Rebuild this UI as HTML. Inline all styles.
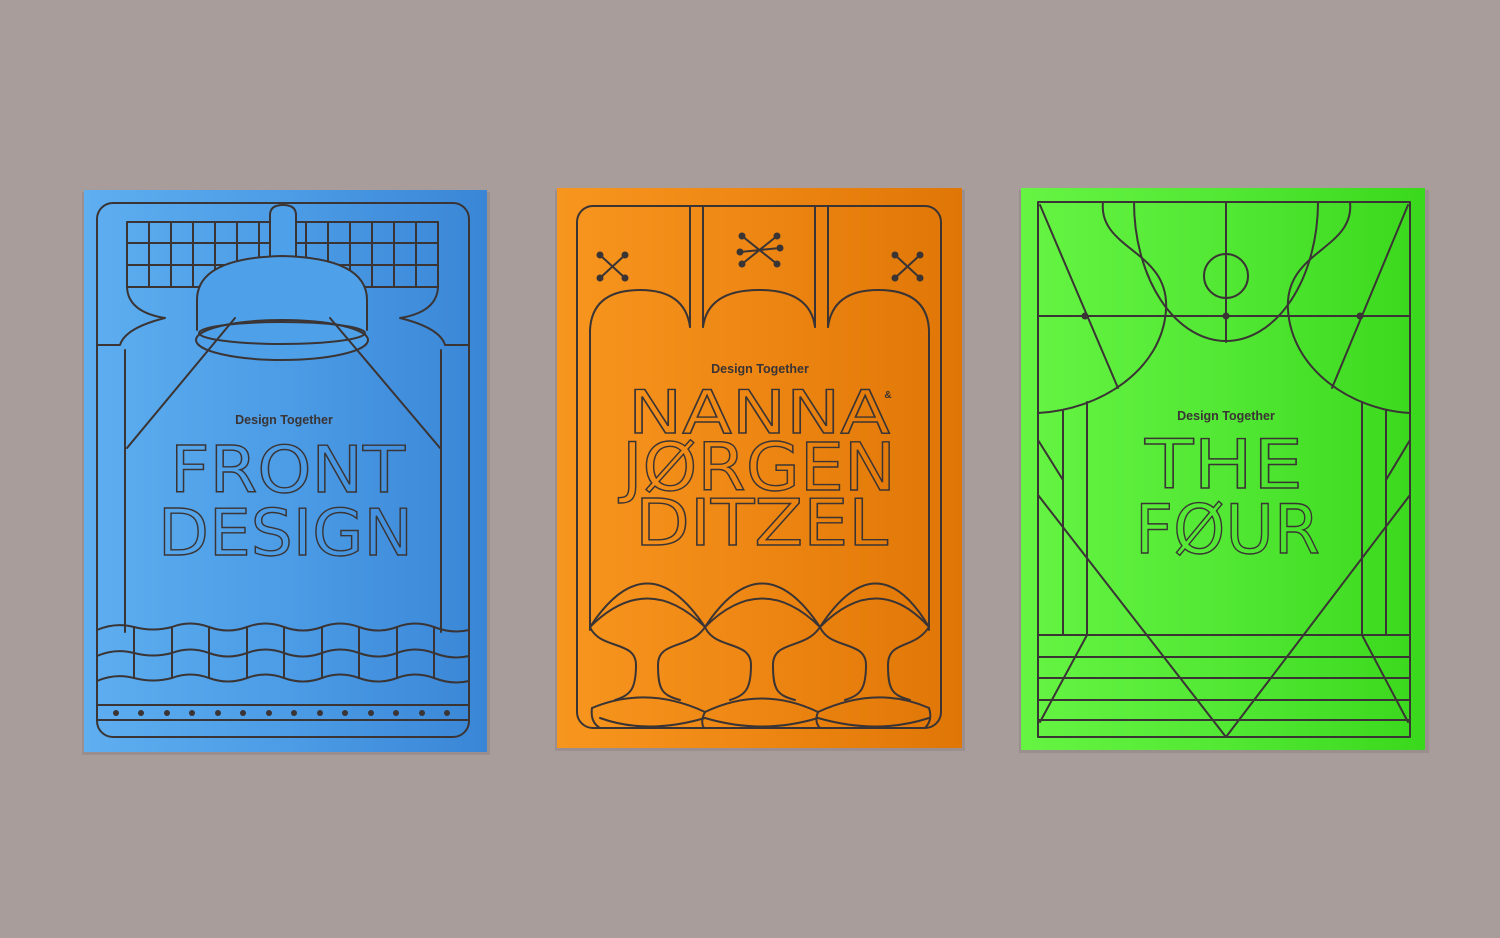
<!DOCTYPE html>
<html><head><meta charset="utf-8"><style>html,body{margin:0;padding:0;background:#a89d9b;}svg{display:block}</style></head><body>
<svg width="1500" height="938" viewBox="0 0 1500 938" xmlns="http://www.w3.org/2000/svg">
<defs>
<linearGradient id="gb" x1="0" x2="1"><stop offset="0" stop-color="#5eaef0"/><stop offset="0.5" stop-color="#4c9ce6"/><stop offset="1" stop-color="#3a86d6"/></linearGradient>
<linearGradient id="go" x1="0" x2="1"><stop offset="0" stop-color="#f7961f"/><stop offset="0.5" stop-color="#ee8613"/><stop offset="1" stop-color="#df7606"/></linearGradient>
<linearGradient id="gg" x1="0" x2="1"><stop offset="0" stop-color="#66f443"/><stop offset="0.5" stop-color="#52e834"/><stop offset="1" stop-color="#3ad81c"/></linearGradient>
</defs>
<rect width="1500" height="938" fill="#a89d9b"/>
<rect x="82" y="192" width="408" height="563" fill="#9a8f8e"/>
<rect x="555" y="190" width="410" height="561" fill="#9a8f8e"/>
<rect x="1019" y="190" width="410" height="563" fill="#9a8f8e"/>
<rect x="84" y="190" width="403" height="562" fill="url(#gb)"/>
<rect x="557" y="188" width="405" height="560" fill="url(#go)"/>
<rect x="1021" y="188" width="404" height="562" fill="url(#gg)"/>

<g fill="none" stroke="#3a3434" stroke-width="2" stroke-linejoin="round" stroke-linecap="round">
<!-- BLUE -->
<rect x="97" y="203" width="372" height="534" rx="16"/>
<path d="M127,222H438M127,243H438M127,265H438M127,287H438"/>
<path d="M127,222V287M149,222V287M171,222V287M193,222V287M215,222V287M237,222V287M259,222V287M306,222V287M328,222V287M350,222V287M372,222V287M394,222V287M416,222V287M438,222V287"/>
<path d="M270,262V215Q270,205 283,205Q296,205 296,215V262" fill="#4ea0e8"/>
<path d="M197,330V300Q197,258 282,256Q367,258 367,300V330" fill="#4ea0e8"/>
<ellipse cx="282" cy="340" rx="86" ry="20" fill="#4ea0e8"/>
<ellipse cx="282" cy="333" rx="83" ry="11"/>
<path d="M235,318L127,448M330,318L440,448"/>
<path d="M127,287Q128,312 165,318Q125,328 120,345L97,345"/>
<path d="M438,287Q437,312 400,318Q440,328 445,345L469,345"/>
<path d="M125,350V632M441,350V632"/>
<path d="M97,630Q115,622 134,627Q153,632 172,627Q190,620 209,627Q228,634 247,627Q265,620 284,627Q303,634 322,627Q340,620 359,627Q378,634 397,627Q415,620 434,627Q452,634 469,630"/>
<path d="M97,656Q115,648 134,653Q153,658 172,653Q190,646 209,653Q228,660 247,653Q265,646 284,653Q303,660 322,653Q340,646 359,653Q378,660 397,653Q415,646 434,653Q452,660 469,656"/>
<path d="M97,681Q115,673 134,678Q153,683 172,678Q190,671 209,678Q228,685 247,678Q265,671 284,678Q303,685 322,678Q340,671 359,678Q378,685 397,678Q415,671 434,678Q452,685 469,681"/>
<path d="M134,627V678M172,627V678M209,627V678M247,627V678M284,627V678M322,627V678M359,627V678M397,627V678M434,627V678"/>
<path d="M97,705H469M97,720H469"/>
<!-- ORANGE -->
<rect x="577" y="206" width="364" height="522" rx="16"/>
<path d="M690,206V327M703,206V327M815,206V327M828,206V327"/>
<path d="M590,630V330Q592,290 640,290Q685,290 690,327"/>
<path d="M703,327Q708,290 759,290Q810,290 815,327"/>
<path d="M828,327Q833,290 878,290Q927,290 929,330V630"/>
<path d="M600,255L625,278M625,255L600,278M895,255L920,278M920,255L895,278M742,236L777,264M777,236L742,264M740,252L780,248"/>
<path d="M590,627Q647,540 705,627Q762,540 820,627Q877,540 929,627"/>
<path d="M590,627Q647,570 705,627Q762,570 820,627Q877,570 929,627"/>
<path d="M590,627C600,650 636,640 636,665C636,690 630,695 615,700M705,627C690,650 658,640 658,665C658,690 662,695 680,700"/>
<path d="M705,627C715,650 751,640 751,665C751,690 745,695 730,700M820,627C805,650 773,640 773,665C773,690 777,695 795,700"/>
<path d="M820,627C830,650 866,640 866,665C866,690 860,695 845,700M929,627C914,650 888,640 888,665C888,690 892,695 910,700"/>
<path d="M592,708Q647,685 705,712Q762,685 818,712Q877,685 929,708"/>
<path d="M592,708Q590,722 600,728M705,712Q700,722 704,728M818,712Q814,722 820,728M929,708Q933,720 925,728"/>
<path d="M600,718Q647,735 705,718Q762,735 818,718Q877,735 929,718"/>
<circle cx="600" cy="255" r="2.5" fill="#3a3434"/><circle cx="625" cy="255" r="2.5" fill="#3a3434"/><circle cx="600" cy="278" r="2.5" fill="#3a3434"/><circle cx="625" cy="278" r="2.5" fill="#3a3434"/>
<circle cx="895" cy="255" r="2.5" fill="#3a3434"/><circle cx="920" cy="255" r="2.5" fill="#3a3434"/><circle cx="895" cy="278" r="2.5" fill="#3a3434"/><circle cx="920" cy="278" r="2.5" fill="#3a3434"/>
<circle cx="742" cy="236" r="2.5" fill="#3a3434"/><circle cx="777" cy="236" r="2.5" fill="#3a3434"/><circle cx="742" cy="264" r="2.5" fill="#3a3434"/><circle cx="777" cy="264" r="2.5" fill="#3a3434"/><circle cx="740" cy="252" r="2.5" fill="#3a3434"/><circle cx="780" cy="248" r="2.5" fill="#3a3434"/>
<!-- GREEN -->
<rect x="1038" y="202" width="372" height="535"/>
<path d="M1038,316H1410M1226,202V342"/>
<circle cx="1226" cy="276" r="22"/>
<path d="M1134,202A92,139 0 0 0 1318,202"/>
<path d="M1103,202C1098,250 1170,250 1166,310C1162,370 1100,410 1038,413"/>
<path d="M1350,202C1355,250 1284,250 1288,310C1292,370 1352,410 1410,413"/>
<path d="M1040,205L1118,388M1408,205L1332,388"/>
<path d="M1063,410V635M1087,402V635M1362,402V635M1386,410V635"/>
<path d="M1038,440L1063,480M1410,440L1386,480"/>
<path d="M1038,495L1226,737L1410,495"/>
<path d="M1038,635H1410M1038,657H1410M1038,678H1410M1038,700H1410M1038,720H1410"/>
<path d="M1087,635L1040,722M1362,635L1408,722"/>
</g>
<g fill="#3a3434">
<circle cx="116" cy="713" r="3"/><circle cx="141" cy="713" r="3"/><circle cx="167" cy="713" r="3"/><circle cx="192" cy="713" r="3"/><circle cx="218" cy="713" r="3"/><circle cx="243" cy="713" r="3"/><circle cx="269" cy="713" r="3"/><circle cx="294" cy="713" r="3"/><circle cx="320" cy="713" r="3"/><circle cx="345" cy="713" r="3"/><circle cx="371" cy="713" r="3"/><circle cx="396" cy="713" r="3"/><circle cx="422" cy="713" r="3"/><circle cx="447" cy="713" r="3"/>
<circle cx="1085" cy="316" r="3.5"/><circle cx="1226" cy="316" r="3.5"/><circle cx="1360" cy="316" r="3.5"/>
</g>
<g font-family="'Liberation Sans',sans-serif" font-weight="bold" font-size="12.5" fill="#3a3434" text-anchor="middle">
<text x="284" y="424">Design Together</text>
<text x="760" y="373">Design Together</text>
<text x="1226" y="420">Design Together</text>
<text x="888" y="398" font-size="10">&amp;</text>
</g>
<g font-family="'DejaVu Sans',sans-serif" fill="none" stroke="#3a3434" stroke-width="1.4">
<text x="170" y="492" font-size="64" textLength="235" lengthAdjust="spacingAndGlyphs">FRONT</text>
<text x="158" y="555" font-size="64" textLength="255" lengthAdjust="spacingAndGlyphs">DESIGN</text>
<text x="628" y="433" font-size="60" textLength="262" lengthAdjust="spacingAndGlyphs">NANNA</text>
<text x="622" y="490" font-size="66" textLength="274" lengthAdjust="spacingAndGlyphs">JØRGEN</text>
<text x="635" y="545" font-size="64" textLength="253" lengthAdjust="spacingAndGlyphs">DITZEL</text>
<text x="1145" y="488" font-size="68" textLength="158" lengthAdjust="spacingAndGlyphs">THE</text>
<text x="1135" y="553" font-size="68" textLength="185" lengthAdjust="spacingAndGlyphs">FØUR</text>
</g>
</svg>
</body></html>
